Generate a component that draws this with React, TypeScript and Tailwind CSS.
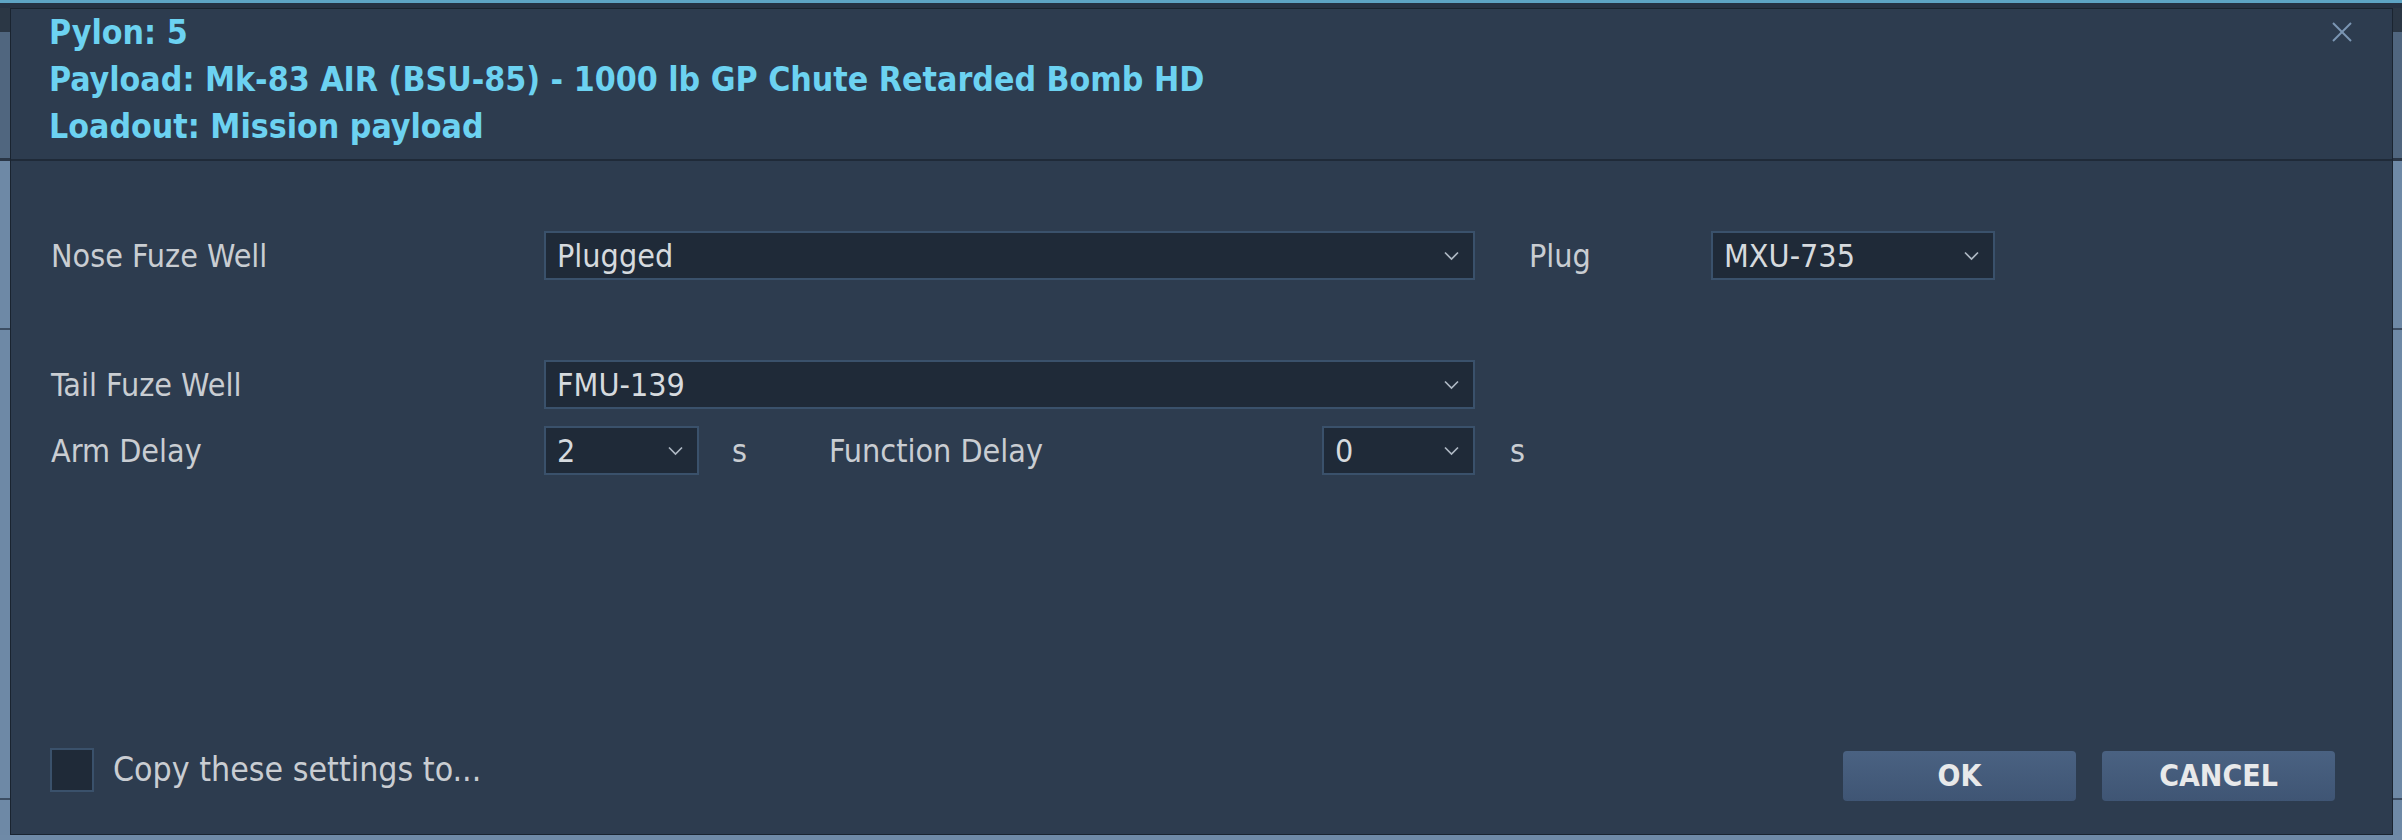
import React from 'react';

const FONT = "font-['DejaVu_Sans_Condensed','DejaVu_Sans',sans-serif] font-stretch-condensed";

interface SelectProps {
  value: string;
  width: string;
}

const Chevron: React.FC = () => (
  <svg width="15" height="10" viewBox="0 0 15 10" className="shrink-0">
    <polyline points="1,1.5 7.5,8 14,1.5" fill="none" stroke="#aeb8c3" strokeWidth="1.7" />
  </svg>
);

const Select: React.FC<SelectProps> = ({ value, width }) => (
  <div
    className={`${width} h-[49px] shrink-0 flex items-center justify-between pl-[11px] pr-[14px] bg-[#1f2a38] border-2 border-[#3a516b] text-[32px] text-[#d6dade] leading-none`}
  >
    <span>{value}</span>
    <Chevron />
  </div>
);

const Label: React.FC<{ children: React.ReactNode; className?: string }> = ({ children, className }) => (
  <div className={`shrink-0 text-[32px] text-[#c9cdd2] leading-none ${className ?? ''}`}>{children}</div>
);

const SideStrip: React.FC = () => (
  <div className="w-full h-full flex flex-col">
    <div className="h-[24px] bg-[#2b3745]" />
    <div className="h-[126px] bg-[#50667f]" />
    <div className="h-[3px] bg-[#2a3646]" />
    <div className="h-[167px] bg-[#6e89a6]" />
    <div className="h-[2px] bg-[#3c4d62]" />
    <div className="h-[468px] bg-[#6e89a6]" />
    <div className="h-[2px] bg-[#3c4d62]" />
    <div className="flex-1 bg-[#6e89a6]" />
  </div>
);

export default function App() {
  return (
    <div className={`w-[2402px] h-[840px] flex flex-col bg-[#6f8aa7] overflow-hidden ${FONT}`}>
      {/* backdrop top edge */}
      <div className="h-[8px] shrink-0 border-t-[3px] border-[#5ea4c4] bg-[#263243]" />

      <div className="flex h-[827px]">
        <div className="w-[10px] shrink-0">
          <SideStrip />
        </div>

        {/* Dialog */}
        <div className="w-[2383px] h-[827px] shrink-0 flex flex-col bg-[#2d3c4f] border border-[#1a2430]">
          {/* Header */}
          <div className="relative shrink-0 pl-[38px] pb-[9px] border-b-2 border-[#1f2a38]">
            <div className="text-[33.6px] leading-[47px] font-bold text-[#6cd2f1]">
              <div>Pylon: 5</div>
              <div>Payload: Mk-83 AIR (BSU-85) - 1000 lb GP Chute Retarded Bomb HD</div>
              <div>Loadout: Mission payload</div>
            </div>
            <button className="absolute top-[11px] right-[38px] w-[24px] h-[24px] flex items-center justify-center">
              <svg width="24" height="24" viewBox="0 0 24 24">
                <line x1="3" y1="3" x2="21" y2="21" stroke="#7b96b3" strokeWidth="2" />
                <line x1="21" y1="3" x2="3" y2="21" stroke="#7b96b3" strokeWidth="2" />
              </svg>
            </button>
          </div>

          {/* Body */}
          <div className="flex-1 flex flex-col pl-[40px] pr-[57px] pt-[70px] pb-[33px]">
            <div className="flex items-center">
              <Label className="w-[493px]">Nose Fuze Well</Label>
              <Select value="Plugged" width="w-[931px]" />
              <Label className="w-[182px] pl-[54px] box-content">Plug</Label>
              <Select value="MXU-735" width="w-[284px]" />
            </div>

            <div className="flex items-center mt-[80px]">
              <Label className="w-[493px]">Tail Fuze Well</Label>
              <Select value="FMU-139" width="w-[931px]" />
            </div>

            <div className="flex items-center mt-[17px]">
              <Label className="w-[493px]">Arm Delay</Label>
              <Select value="2" width="w-[155px]" />
              <Label className="w-[130px] pl-[33px]">s</Label>
              <Label className="w-[493px]">Function Delay</Label>
              <Select value="0" width="w-[153px]" />
              <Label className="pl-[35px]">s</Label>
            </div>

            <div className="flex-1" />

            {/* Footer */}
            <div className="flex items-start justify-between">
              <div className="flex items-center gap-[19px] -ml-[1px]">
                <div className="w-[44px] h-[44px] bg-[#1f2a38] border-2 border-[#3a516b]" />
                <span className="text-[33.6px] text-[#c9cdd2] leading-none">Copy these settings to...</span>
              </div>
              <div className="flex gap-[26px] mt-[3px]">
                <button className="w-[233px] h-[50px] rounded-[4px] bg-gradient-to-b from-[#4a6282] to-[#3f5574] text-[30px] font-bold text-[#e8e9ea] leading-none">
                  OK
                </button>
                <button className="w-[233px] h-[50px] rounded-[4px] bg-gradient-to-b from-[#4a6282] to-[#3f5574] text-[30px] font-bold text-[#e8e9ea] leading-none">
                  CANCEL
                </button>
              </div>
            </div>
          </div>
        </div>

        <div className="flex-1">
          <SideStrip />
        </div>
      </div>

      <div className="flex-1 bg-[#6f8aa7]" />
    </div>
  );
}
